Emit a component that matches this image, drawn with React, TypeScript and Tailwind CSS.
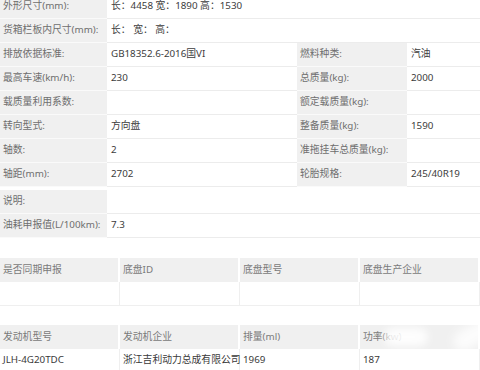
const font = { fontFamily: '"Noto Sans", "Noto Sans CJK SC", sans-serif' };

type Pair = { label: string; value?: string };

const leftRows: Pair[] = [
  { label: "外形尺寸(mm):", value: "长：4458 宽：1890 高：1530" },
  { label: "货箱栏板内尺寸(mm):", value: "长： 宽： 高：" },
];

const splitRows: [Pair, Pair][] = [
  [{ label: "排放依据标准:", value: "GB18352.6-2016国VI" }, { label: "燃料种类:", value: "汽油" }],
  [{ label: "最高车速(km/h):", value: "230" }, { label: "总质量(kg):", value: "2000" }],
  [{ label: "载质量利用系数:" }, { label: "额定载质量(kg):" }],
  [{ label: "转向型式:", value: "方向盘" }, { label: "整备质量(kg):", value: "1590" }],
  [{ label: "轴数:", value: "2" }, { label: "准拖挂车总质量(kg):" }],
  [{ label: "轴距(mm):", value: "2702" }, { label: "轮胎规格:", value: "245/40R19" }],
];

const noteRows: Pair[] = [
  { label: "说明:" },
  { label: "油耗申报值(L/100km):", value: "7.3" },
];

function Label({ text, w }: { text: string; w: string }) {
  return (
    <div className={`${w} h-full shrink-0 bg-[#f0f0f0] border-b border-[#fafafa] flex items-center pl-[3px] text-[#6e6e6e] whitespace-nowrap`}>
      {text}
    </div>
  );
}

function Value({ text, w }: { text?: string; w: string }) {
  return (
    <div className={`${w} h-full border-b border-[#ececec] flex items-center pl-[4px] text-[#3c3c3c] whitespace-nowrap`}>
      {text}
    </div>
  );
}

function Table({ head, row }: { head: string[]; row: string[] }) {
  return (
    <div>
      <div className="grid grid-cols-4 h-[24px] bg-[#f0f0f0] text-[#7a7a7a]">
        {head.map((h, i) => (
          <div key={i} className="flex items-center pl-[3px] border-r-2 border-white whitespace-nowrap">
            {h}
          </div>
        ))}
      </div>
      <div className="grid grid-cols-4 h-[24px] text-[#3a3a3a] border-b border-[#efefef]">
        {row.map((c, i) => (
          <div key={i} className="flex items-center pl-[3px] border-r border-[#efefef] whitespace-nowrap">
            {c}
          </div>
        ))}
      </div>
    </div>
  );
}

export default function App() {
  return (
    <div className="relative w-[480px] h-[370px] overflow-hidden bg-white text-[9.8px]" style={font}>
      <div className="-mt-[5px]">
        {/* Basic params */}
        {leftRows.map((r) => (
          <div key={r.label} className="flex h-[24px]">
            <Label text={r.label} w="w-[107px]" />
            <Value text={r.value} w="flex-1" />
          </div>
        ))}
        {splitRows.map(([a, b]) => (
          <div key={a.label} className="flex h-[24px]">
            <Label text={a.label} w="w-[107px]" />
            <Value text={a.value} w="w-[190px]" />
            <Label text={b.label} w="w-[110px]" />
            <Value text={b.value} w="flex-1" />
          </div>
        ))}

        <div className="h-[3px]" />
        {noteRows.map((r) => (
          <div key={r.label} className="flex h-[24px]">
            <Label text={r.label} w="w-[107px]" />
            <Value text={r.value} w="flex-1" />
          </div>
        ))}

        <div className="h-[20px]" />
        <Table head={["是否同期申报", "底盘ID", "底盘型号", "底盘生产企业"]} row={["", "", "", ""]} />

        <div className="h-[19px]" />
        <Table
          head={["发动机型号", "发动机企业", "排量(ml)", "功率(kw)"]}
          row={["JLH-4G20TDC", "浙江吉利动力总成有限公司", "1969", "187"]}
        />
      </div>

      {/* watermark smudges */}
      <div className="absolute left-[384px] top-[328px] w-[44px] h-[18px] rounded-full bg-white/90 blur-[4px]" />
      <div className="absolute left-[452px] top-[326px] w-[40px] h-[20px] rounded-full bg-white/80 blur-[5px] -rotate-[30deg]" />
    </div>
  );
}
